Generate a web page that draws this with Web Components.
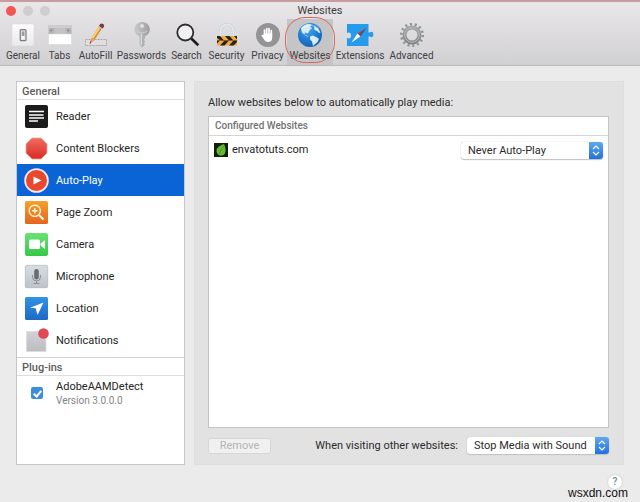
<!DOCTYPE html>
<html lang="en">
<head>
<meta charset="utf-8">
<title>Websites</title>
<style>
html, body { margin: 0; height: 100%; }
body { font-family: Roboto, "Liberation Sans", sans-serif; font-size: 11px; line-height: 16px; color: #2c2c2c; background: #ebebeb; }
</style>
</head>
<body>
<script>
const ICONS = {
general: `<svg viewBox="0 0 28 26"><defs><linearGradient id="a" x2="0" y2="1"><stop stop-color="#fdfdfd"/><stop offset="1" stop-color="#e9e9ec"/></linearGradient></defs><rect x="3" y="2" width="22" height="22" rx="1.5" fill="url(#a)" stroke="#dcdbdd" stroke-width=".6"/><rect x="11.2" y="7.700" width="5.800" height="11" rx="1" fill="#e3e3e4" stroke="#7e7e82" stroke-width="1.200"/><rect x="12.800" y="9.500" width="2.600" height="4.400" fill="#9c9ca0"/><rect x="12.800" y="14" width="2.600" height="3" fill="#f7f7f7"/></svg>`,
tabs: `<svg viewBox="0 0 28 26"><path d="M2.5 3h23v9h-23z" fill="#b4b3b5"/><path d="M2.5 3h23v3h-23z" fill="#cdccce"/><path d="M9 6h10l2 6H7z" fill="#c3c2c4"/><path d="M4 8.500l1.200-1.200 1.200 1.200-1.200 1.200zM21 8.500l1.200-1.200 1.200 1.200-1.200 1.200z" fill="#858487"/><path d="M2.500 12h23v10.500h-23z" fill="#fff" stroke="#d8d7d9" stroke-width=".6"/></svg>`,
autofill: `<svg viewBox="0 0 28 26"><rect x="3.500" y="17.500" width="21" height="6" fill="#dfdee0" stroke="#8e8d90" stroke-width=".7" stroke-dasharray="2 1"/><path d="M8 21.500l1.600-5.500L18 2.500l3.200 2.200-8.700 13.200z" fill="#eeb044"/><path d="M10.700 16L18.700 3.500" stroke="#fbda80" stroke-width="1.200"/><path d="M11.900 17.400l8.600-13" stroke="#a97326" stroke-width=".7"/><path d="M17 4l1.200-2q1.200-1.200 3 0 1.600 1.200.8 2.500l-1.300 2z" fill="#803737"/><path d="M17 4l3.700 2.500-.8 1.100-3.700-2.400z" fill="#b9b9bd"/><path d="M8 21.500l1.600-5.500 2.900 1.900z" fill="#e19b86"/><path d="M8 21.800l1-3" stroke="#a33" stroke-width="1"/></svg>`,
passwords: `<svg viewBox="0 0 28 26"><defs><linearGradient id="a"><stop stop-color="#c9cacc"/><stop offset=".5" stop-color="#b2b4b6"/><stop offset="1" stop-color="#9c9ea1"/></linearGradient></defs><path fill-rule="evenodd" d="M14 0a7.500 7.500 0 0 0-2.500 14.600V22l2.500 3.500 3-3-1.200-1.500 1.500-1.500-1.500-1.500 1.200-1.500v-2A7.500 7.500 0 0 0 14 0zm0 2a2 2 0 1 1 0 4 2 2 0 0 1 0-4z" fill="url(#a)"/><path d="M13.300 12v11" stroke="#e2e2e4" stroke-width="1"/><path d="M9 9q5 4 10 0" fill="none" stroke="#d0d2d4" stroke-width=".9"/></svg>`,
search: `<svg viewBox="0 0 28 26"><circle cx="12.300" cy="10.500" r="8" fill="#f1f1f3" stroke="#2e2e30" stroke-width="1.800"/><path d="M18.300 16.500l7 6.700" stroke="#1c1c1e" stroke-width="2.600"/></svg>`,
security: `<svg viewBox="0 0 28 26"><path d="M7.500 15V9a6.500 6.500 0 0 1 13 0V15" fill="none" stroke="#c3cdd6" stroke-width="3"/><path d="M7.500 15V9a6.500 6.500 0 0 1 13 0V15" fill="none" stroke="#e4e8ec" stroke-width="2"/><rect x="4" y="14" width="20" height="9.500" fill="#efad43"/><path d="M4 14h3l4 4.500H7.500L4 16zM12 14h4.500l4 4.500H16zM21 14h3v3.500zM4 18.500h3L4 21.500zM11.500 18.500h4.500L11.500 23.500H7zM20.500 18.500H24v1.500l-3.500 3.500H16z" fill="#2b221d"/><path d="M4 18.500h20" stroke="#7c532c" stroke-width=".6"/></svg>`,
privacy: `<svg viewBox="0 0 28 26"><circle cx="14" cy="13" r="12" fill="#949496"/><path d="M10.500 14V8M12.700 13V6.500M15 13V6.500M17.300 14V8.500" stroke="#fff" stroke-width="1.700" stroke-linecap="round"/><path d="M9.700 11.500h8.500v4q0 4.500-4 4.500-3 0-4.500-3L7.200 13.300q1-1.200 2.500.3z" fill="#fff"/></svg>`,
websites: `<svg viewBox="0 0 28 26"><defs><radialGradient id="a" cx=".4" cy=".25" r=".8"><stop stop-color="#48a9ef"/><stop offset=".6" stop-color="#1d79cd"/><stop offset="1" stop-color="#1460af"/></radialGradient></defs><circle cx="14" cy="13" r="12" fill="url(#a)"/><path d="M5 6.500Q8 2 13 2l3 1-2 1.500 2 1.500-3 3-1 2.500-3-1-.5 2 2.500 1 1.500 2L9 13 6 10.500zM18 4l4 2.500 2.500 4-1.500.5-2-2-2.500-1zM14 14.500l3-1 4 2 2 1.500-1.500 3-3.500 3-1 1-1-4.500-2-2z" fill="#d7ecf5"/><path d="M5 7q8-8 18 0" fill="none" stroke="#fff" stroke-opacity=".35" stroke-width="1.500"/></svg>`,
extensions: `<svg viewBox="0 0 28 26"><path d="M1 2h21.500v8.500h1.300q3.600-2 3.600 2t-3.600 2h-1.300V24H1v-8q4 1.600 4-2.500T1 11z" fill="#259bee"/><path d="M20 6l-8.500 5.500 3 3z" fill="#a63f4d"/><path d="M20 6l-5.500 8.500-1.500-1.500z" fill="#54506e"/><path d="M5.500 20.500L11.500 11.500l3 3z" fill="#fff"/></svg>`,
advanced: `<svg viewBox="0 0 28 26"><defs><linearGradient id="a" x2="0" y2="1"><stop stop-color="#a4a9a8"/><stop offset="1" stop-color="#7d8081"/></linearGradient></defs><circle cx="14" cy="13" r="10.700" fill="none" stroke="#929697" stroke-width="2.800" stroke-dasharray="2.100 2.700"/><path fill-rule="evenodd" fill="url(#a)" d="M14 3.500a9.500 9.500 0 1 1 0 19 9.500 9.500 0 0 1 0-19zm0 4a5.500 5.500 0 1 0 0 11 5.500 5.500 0 0 0 0-11z"/><circle cx="14" cy="13" r="7.300" fill="none" stroke="#b9bcbc" stroke-width="1"/></svg>`,
reader: `<svg viewBox="0 0 26 26"><rect x="2" y="1" width="23" height="23" rx="2" fill="#1b1b1b"/><path d="M6 7.500h15M6 11h14.500M6 14h15M6 17h9" stroke="#fff" stroke-width="1.400"/></svg>`,
blockers: `<svg viewBox="0 0 26 26"><defs><linearGradient id="a" x2="0" y2="1"><stop stop-color="#f36b5e"/><stop offset="1" stop-color="#d92b25"/></linearGradient></defs><path d="M9 2h9l6 6v9l-6 6H9l-6-6V8z" fill="url(#a)" stroke="#e5a59d" stroke-width=".8"/></svg>`,
autoplay: `<svg viewBox="0 0 26 26"><circle cx="13.500" cy="12.500" r="11.400" fill="#e8492e" stroke="#f3e6ec" stroke-width="1.800"/><path d="M10.500 8.500l8 4-8 4z" fill="#fff"/></svg>`,
zoom: `<svg viewBox="0 0 26 26"><defs><linearGradient id="a" x2="0" y2="1"><stop stop-color="#f3a22c"/><stop offset="1" stop-color="#e5641f"/></linearGradient></defs><rect x="2" y="1" width="23" height="23" rx="1.500" fill="url(#a)"/><g fill="none" stroke="#fff4d8" stroke-width="1.400"><circle cx="11.800" cy="10.800" r="5.600"/><path d="M16 15l4.500 4.500" stroke-width="2.200"/><path d="M9 10.800h5.600M11.800 8v5.600"/></g></svg>`,
camera: `<svg viewBox="0 0 26 26"><defs><linearGradient id="a" x2="0" y2="1"><stop stop-color="#6ae274"/><stop offset="1" stop-color="#35c848"/></linearGradient></defs><rect x="2" y="1" width="23" height="23" rx="2" fill="url(#a)"/><rect x="6" y="7.500" width="11" height="9.500" rx="1.500" fill="#fff"/><path d="M17.500 11.500L22 8v9l-4.500-3.500z" fill="#fff"/></svg>`,
microphone: `<svg viewBox="0 0 26 26"><defs><linearGradient id="a" x2="0" y2="1"><stop stop-color="#d8dee2"/><stop offset="1" stop-color="#bcc3c9"/></linearGradient></defs><rect x="2.300" y="1.300" width="22.400" height="22.400" rx="1.500" fill="url(#a)" stroke="#a6adb2" stroke-width=".6"/><rect x="11.200" y="5" width="4.600" height="10.500" rx="2.300" fill="#6a6d70"/><path d="M9.500 11v2q0 4 4 4t4-4V11M13.500 17v2.500M10.500 19.500h6" fill="none" stroke="#85898c" stroke-width=".9"/></svg>`,
location: `<svg viewBox="0 0 26 26"><defs><linearGradient id="a" x2="0" y2="1"><stop stop-color="#2f94e4"/><stop offset="1" stop-color="#1f68c4"/></linearGradient></defs><rect x="2" y="1" width="23" height="23" rx="1.500" fill="url(#a)"/><path d="M20.500 6.500L14.500 19l-1.800-6.700L7 11.800z" fill="#fff"/></svg>`,
notifications: `<svg viewBox="0 0 26 26"><defs><linearGradient id="a" x2="0" y2="1"><stop stop-color="#d2d1d5"/><stop offset="1" stop-color="#bdbcc1"/></linearGradient></defs><rect x="3.500" y="3.500" width="19.500" height="20" fill="url(#a)" stroke="#dddcdf" stroke-width=".8"/><circle cx="20.500" cy="5.500" r="5.300" fill="#e14853"/></svg>`,
envato: `<svg viewBox="0 0 14 14"><rect width="14" height="14" fill="#10210b"/><path d="M10 1q2.500 5.500 1 9.500-1.500 2.300-4.500 2.300-3.500-.6-4-4.800Q2.400 5 4 4.500 4.500 3 10 1z" fill="#68b72e"/><path d="M10 3Q6 6.500 5.500 11.500" fill="none" stroke="#3f7d1b" stroke-width=".6"/></svg>`,
stepper: `<svg viewBox="0 0 14 17"><defs><linearGradient id="a" x2="0" y2="1"><stop stop-color="#5ea8ee"/><stop offset="1" stop-color="#2272dc"/></linearGradient></defs><path d="M0 0h11q3 0 3 3v11q0 3-3 3H0z" fill="url(#a)"/><path d="M4 7l3-3 3 3M4 10l3 3 3-3" fill="none" stroke="#fff" stroke-width="1.200"/></svg>`
};

function define(name, html, setup) {
  const template = document.createElement("template");
  template.innerHTML = html;
  customElements.define(name, class extends HTMLElement {
    constructor() {
      super();
      this.attachShadow({ mode: "open" }).append(template.content.cloneNode(true));
    }
    connectedCallback() { if (setup) setup(this, this.shadowRoot); }
  });
}

define("pref-icon", `<style>:host{display:block;flex:none}div,svg{display:block;width:100%;height:100%}</style><div aria-hidden="true"></div>`, (host, root) => {
  root.querySelector("div").innerHTML = ICONS[host.getAttribute("name")];
});

define("tool-item", `<style>
:host { display: block; }
button { position: relative; display: flex; flex-direction: column; align-items: center; width: 100%; height: 46px; padding: 3px 0 0; border: 0; background: none; font: inherit; font-size: 10px; line-height: 16px; color: #414043; white-space: nowrap; }
.icon, pref-icon { width: 28px; height: 26px; }
:host([selected]) button { background: #c5c4c6; }
:host([selected]) button::after { content: ""; position: absolute; inset: -2px -2px 2px -2px; border: 1px solid #d9675f; border-radius: 20px; }
</style><button type="button"><span class="icon"></span><slot></slot></button>`, (host, root) => {
  const icon = document.createElement("pref-icon");
  icon.setAttribute("name", host.getAttribute("icon"));
  root.querySelector(".icon").replaceChildren(icon);
});

define("window-toolbar", `<style>
:host { display: block; background: linear-gradient(#e9e7e9, #d1d0d2); border-top: 2px solid #c99c9f; border-bottom: 1px solid #b9b8ba; }
.title { display: grid; grid-template-columns: 1fr auto 1fr; align-items: center; height: 17px; padding: 0 6px; }
.lights { display: flex; gap: 7px; }
.lights i { width: 10px; height: 10px; border-radius: 50%; background: #cfcdcf; }
.lights i:first-child { background: #f25652; }
h1 { margin: 0; font-size: 11px; font-weight: 400; line-height: 16px; color: #3c3b3d; }
nav { display: grid; grid-template-columns: 40px 33px 39px 53px 37px 43px 39px 46px 54px 49px; padding-left: 3px; }
</style>
<div class="title"><div class="lights"><i></i><i></i><i></i></div><h1>Websites</h1></div>
<nav>
<tool-item icon="general">General</tool-item><tool-item icon="tabs">Tabs</tool-item><tool-item icon="autofill">AutoFill</tool-item><tool-item icon="passwords">Passwords</tool-item><tool-item icon="search">Search</tool-item><tool-item icon="security">Security</tool-item><tool-item icon="privacy">Privacy</tool-item><tool-item icon="websites" selected>Websites</tool-item><tool-item icon="extensions">Extensions</tool-item><tool-item icon="advanced">Advanced</tool-item>
</nav>`);

define("side-item", `<style>
:host { display: block; }
button { display: flex; align-items: center; gap: 7px; width: 100%; height: 32px; padding: 2px 0 0 6px; border: 0; background: none; font: inherit; font-size: 11px; color: #262626; text-align: left; }
:host([selected]) button { background: #0a64d6; color: #fff; }
.icon, pref-icon { width: 26px; height: 26px; }
</style><button type="button"><span class="icon"></span><slot></slot></button>`, (host, root) => {
  const icon = document.createElement("pref-icon");
  icon.setAttribute("name", host.getAttribute("icon"));
  root.querySelector(".icon").replaceChildren(icon);
});

define("side-bar", `<style>
:host { display: block; box-sizing: border-box; background: #fff; border: 1px solid #c6c6c6; }
h2 { margin: 0; padding-left: 5px; height: 17px; font-size: 11px; line-height: 19px; font-weight: 500; color: #5c5c5c; border-bottom: 1px solid #dedede; }
.second { margin-top: 1px; border-top: 1px solid #d2d2d2; }
label { display: grid; grid-template-columns: 12px 1fr; column-gap: 13px; align-items: center; padding: 3px 0 0 14px; }
input { appearance: none; margin: 0; width: 12px; height: 12px; border-radius: 2px; background: #3e8ddd; display: grid; }
input:checked::before { content: ""; place-self: center; width: 3px; height: 6px; border: solid #fff; border-width: 0 2px 2px 0; transform: rotate(40deg); }
label span { display: block; line-height: 16px; color: #262626; }
label small { display: block; font-size: 10px; line-height: 12px; color: #858585; }
</style>
<h2>General</h2>
<side-item icon="reader">Reader</side-item><side-item icon="blockers">Content Blockers</side-item><side-item icon="autoplay" selected>Auto-Play</side-item><side-item icon="zoom">Page Zoom</side-item><side-item icon="camera">Camera</side-item><side-item icon="microphone">Microphone</side-item><side-item icon="location">Location</side-item><side-item icon="notifications">Notifications</side-item>
<h2 class="second">Plug-ins</h2>
<label><input type="checkbox" checked><div><span>AdobeAAMDetect</span><small>Version 3.0.0.0</small></div></label>`);

define("pop-up", `<style>
:host { display: grid; width: 142px; height: 17px; border-radius: 3px; background: #fff; box-shadow: 0 0 1px #aaa, 0 1px 1px #c4c4c4; }
select, pref-icon { grid-area: 1 / 1; }
select { appearance: none; width: 100%; height: 100%; margin: 0; padding: 0 14px 0 7px; border: 0; background: none; font: inherit; font-size: 11px; line-height: 17px; color: #2c2c2c; }
pref-icon { width: 14px; height: 17px; justify-self: end; pointer-events: none; }
</style><select></select><pref-icon name="stepper"></pref-icon>`, (host, root) => {
  const select = root.querySelector("select");
  select.setAttribute("aria-label", host.getAttribute("label"));
  select.replaceChildren(new Option(host.getAttribute("value")));
});

define("site-panel", `<style>
:host { display: flex; flex-direction: column; box-sizing: border-box; padding: 12px 14px 10px 13px; background: #e2e2e2; border: 1px solid #dedede; }
p { margin: 0; height: 22px; line-height: 17px; }
.list { flex: 1; background: #fff; border: 1px solid #c4c4c4; }
table { width: 100%; border-collapse: collapse; }
th { height: 18px; padding: 0 0 0 6px; text-align: left; line-height: 16px; font-weight: 500; font-size: 10px; color: #737373; border-bottom: 1px solid #d4d4d4; }
td { height: 28px; padding: 0; }
.site { padding-left: 5px; }
.site div { display: flex; align-items: center; gap: 4px; line-height: 18px; color: #1f1f1f; }
.site pref-icon { width: 14px; height: 14px; }
td:last-child { width: 147px; }
.actions { display: flex; align-items: center; margin-top: 9px; gap: 9px; }
.actions button { width: 63px; height: 16px; padding: 0; border: 1px solid #d6d6d6; border-radius: 3px; background: #f0f0f0; font: inherit; line-height: 14px; color: #b4b4b4; }
.actions span { margin-left: auto; }
</style>
<p>Allow websites below to automatically play media:</p>
<div class="list"><table><thead><tr><th colspan="2">Configured Websites</th></tr></thead><tbody><tr><td class="site"><div><pref-icon name="envato"></pref-icon>envatotuts.com</div></td><td><pop-up label="envatotuts.com" value="Never Auto-Play"></pop-up></td></tr></tbody></table></div>
<div class="actions"><button type="button" disabled>Remove</button><span>When visiting other websites:</span><pop-up label="When visiting other websites" value="Stop Media with Sound"></pop-up></div>`);

define("prefs-window", `<style>
:host { display: flex; flex-direction: column; min-height: 100vh; position: relative; }
main { flex: 1; display: grid; grid-template-columns: 169px 1fr; gap: 9px; padding: 15px 16px 0; }
footer { display: flex; justify-content: flex-end; height: 27px; padding: 10px 18px 0 0; }
.help { width: 14px; height: 14px; padding: 0; border: 0; border-radius: 50%; background: #fff; box-shadow: 0 0 2px #b5b5b5; font: inherit; font-size: 10px; font-weight: 500; line-height: 10px; color: #6d8d94; }
.mark { position: absolute; right: 12px; bottom: 3px; font: 12px/12px "Liberation Sans", sans-serif; color: #111; }
</style>
<window-toolbar></window-toolbar>
<main><side-bar></side-bar><site-panel></site-panel></main>
<footer><button class="help" type="button" aria-label="Help">?</button></footer>
<span class="mark">wsxdn.com</span>`);
</script>
<prefs-window></prefs-window>
</body>
</html>
